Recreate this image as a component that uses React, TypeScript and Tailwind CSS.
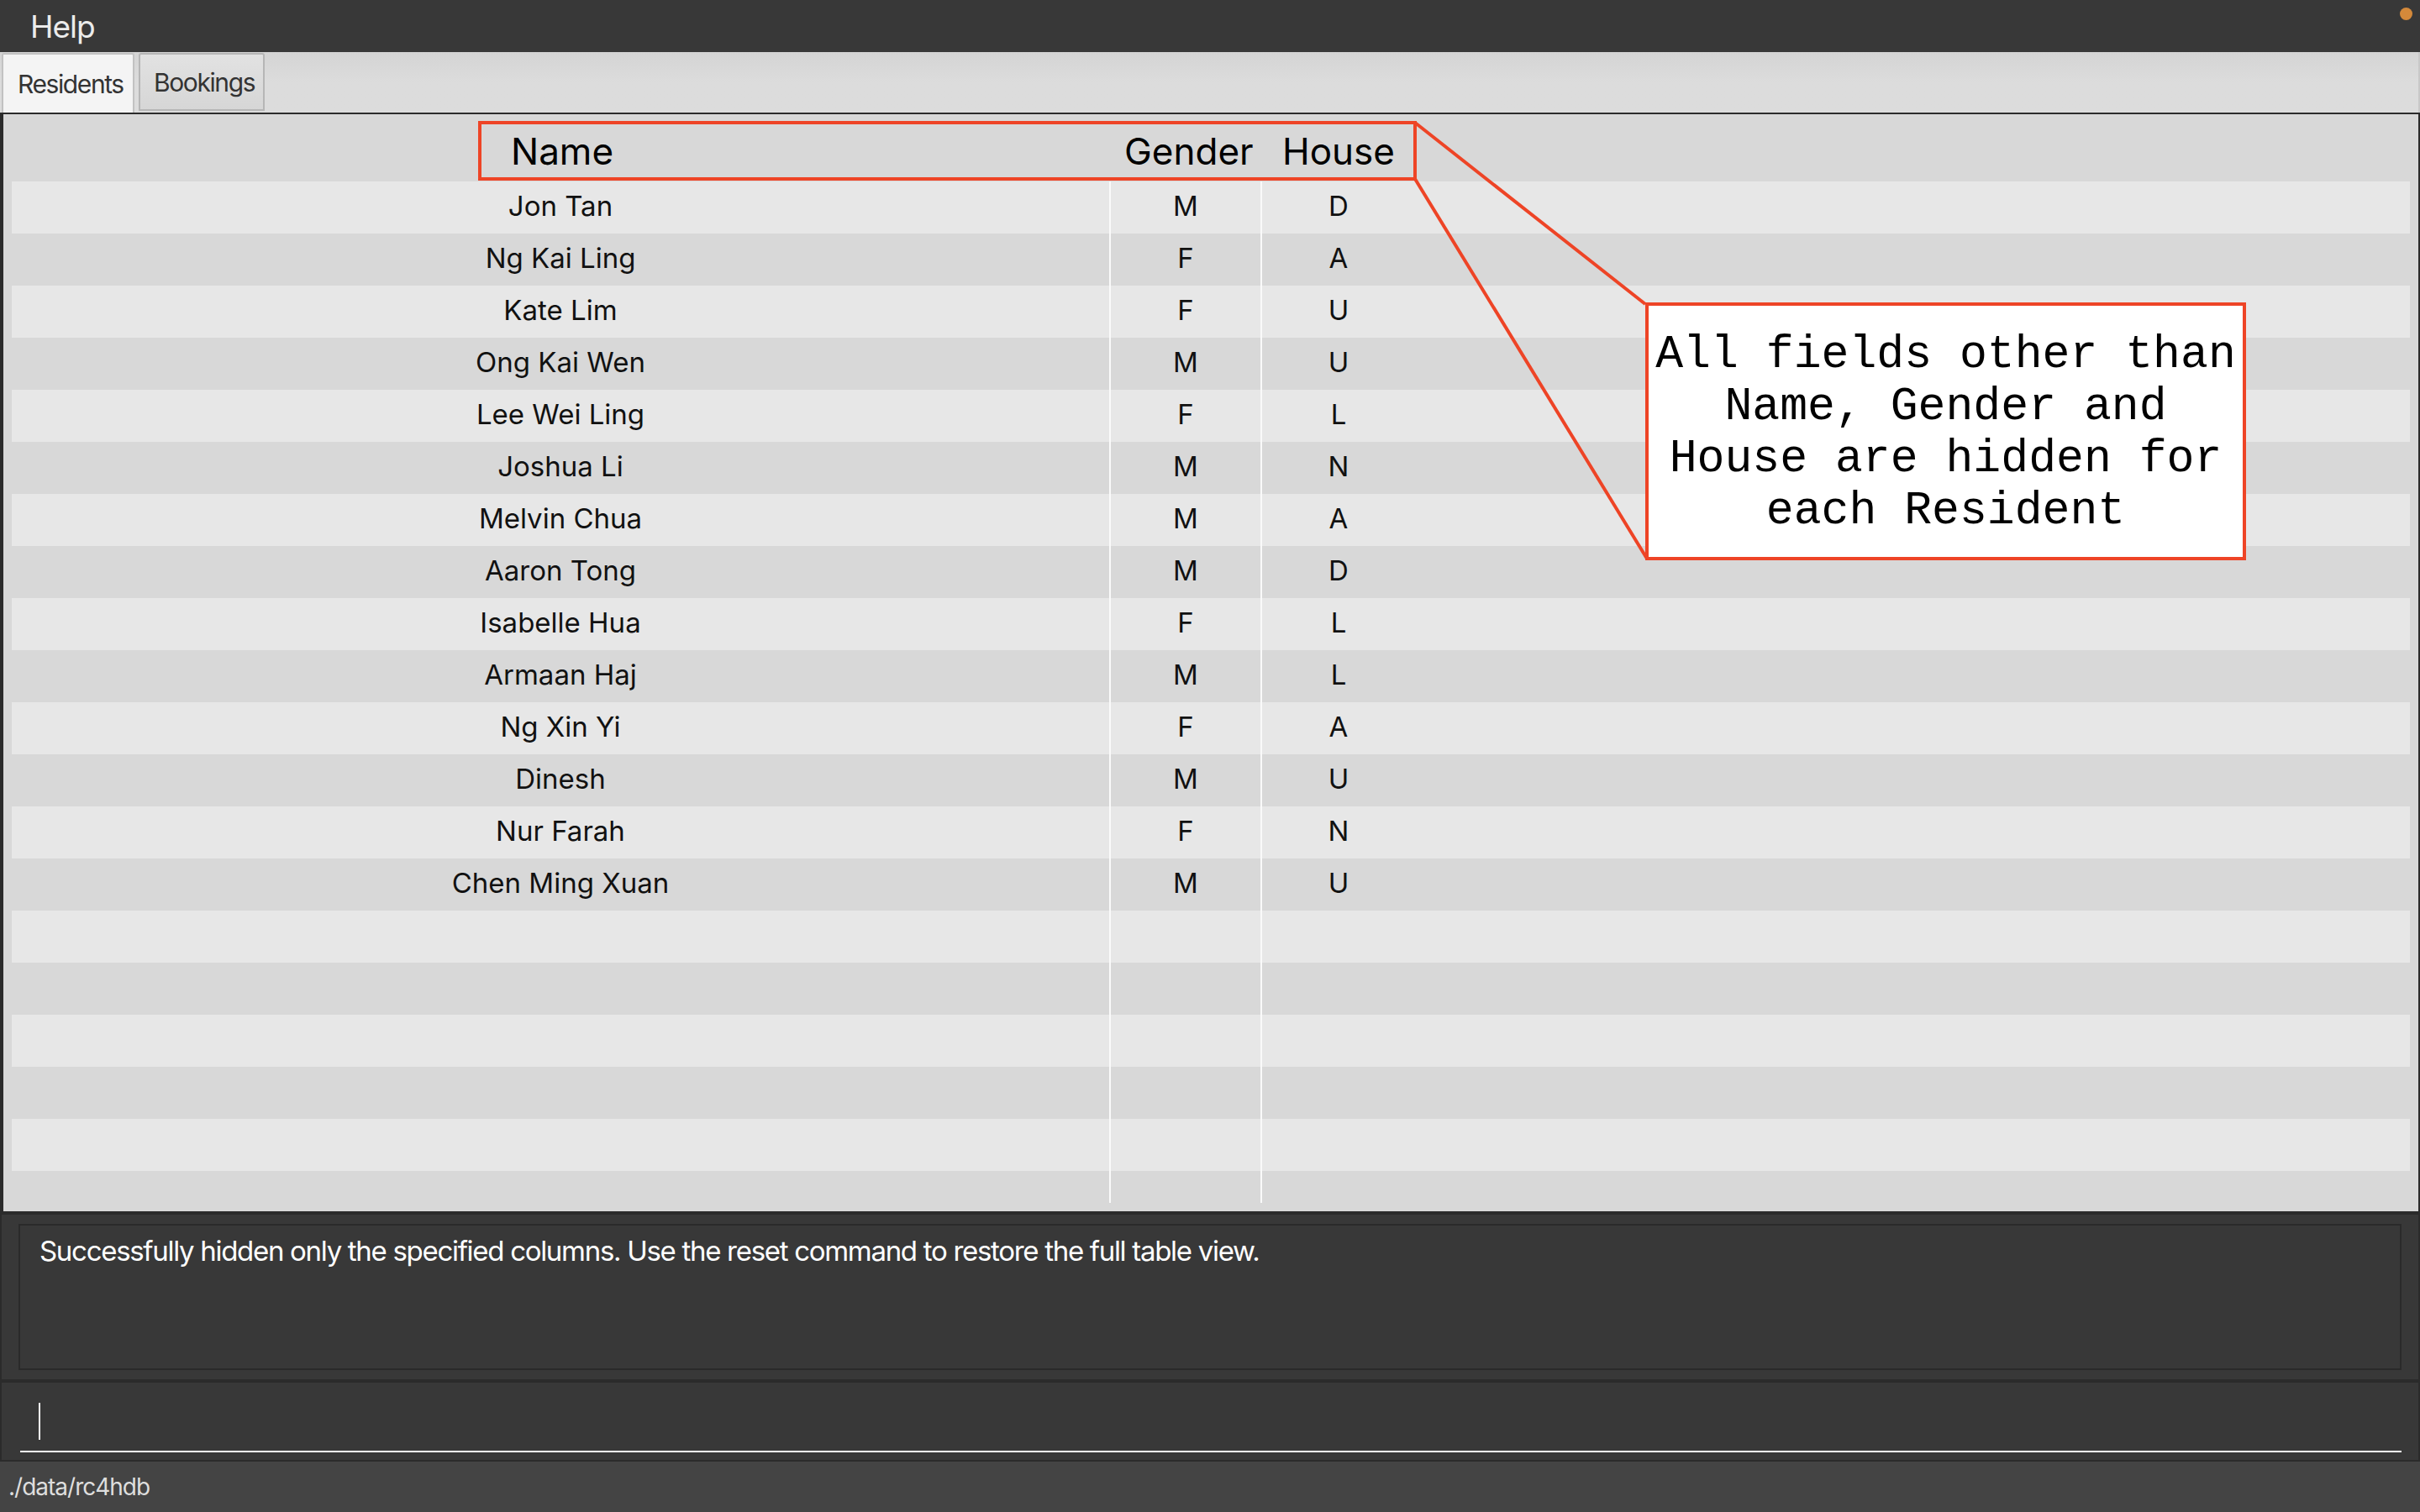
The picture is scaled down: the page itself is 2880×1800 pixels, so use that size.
import React from "react";

const residents: [string, string, string][] = [
  ["Jon Tan", "M", "D"],
  ["Ng Kai Ling", "F", "A"],
  ["Kate Lim", "F", "U"],
  ["Ong Kai Wen", "M", "U"],
  ["Lee Wei Ling", "F", "L"],
  ["Joshua Li", "M", "N"],
  ["Melvin Chua", "M", "A"],
  ["Aaron Tong", "M", "D"],
  ["Isabelle Hua", "F", "L"],
  ["Armaan Haj", "M", "L"],
  ["Ng Xin Yi", "F", "A"],
  ["Dinesh", "M", "U"],
  ["Nur Farah", "F", "N"],
  ["Chen Ming Xuan", "M", "U"],
];

const rows: [string, string, string][] = [
  ...residents,
  ["", "", ""],
  ["", "", ""],
  ["", "", ""],
  ["", "", ""],
  ["", "", ""],
];

const font = { fontFamily: "Inter, 'Noto Sans', sans-serif" };

export default function App() {
  return (
    <div
      className="relative w-[2880px] h-[1800px] flex flex-col bg-[#2b2b2b] overflow-hidden"
      style={font}
    >
      {/* Menu bar */}
      <div className="h-[62px] shrink-0 bg-[#383838] flex items-center pl-[36px] relative">
        <span className="text-[37px] text-[#ebebeb] leading-none tracking-[-1px]">Help</span>
        <div className="absolute right-[9px] top-[9px] w-[15px] h-[15px] rounded-full bg-[#d4893a]" />
      </div>

      {/* Tab header */}
      <div className="h-[72px] shrink-0 bg-gradient-to-b from-[#d4d4d4] via-[#dcdcdc] to-[#dcdcdc] flex items-end pl-[2px] gap-[5px] border-r-2 border-[#c8c8c8]">
        <div className="h-[71px] w-[158px] bg-[#f4f4f4] border-x-2 border-t-2 border-[#c2c2c2] rounded-t-[3px] flex items-center pl-[17px]">
          <span className="text-[30px] text-[#333333] leading-none tracking-[-1.4px]">Residents</span>
        </div>
        <div className="h-[69px] mb-[2px] w-[150px] bg-gradient-to-b from-[#e2e2e2] to-[#d6d6d6] border-2 border-[#b6b6b6] rounded-t-[3px] flex items-center pl-[16px]">
          <span className="text-[30px] text-[#333333] leading-none tracking-[-1.4px]">Bookings</span>
        </div>
      </div>

      {/* Table panel */}
      <div className="h-[1308px] shrink-0 border-t-2 border-l-4 border-r-2 border-[#2b2b2b] bg-[#d8d8d8] flex flex-col pl-[10px] pr-[10px]">
        {/* Header */}
        <div className="h-[80px] shrink-0 flex items-center text-[44px] text-black pt-[7px]">
          <div className="w-[1308px] pl-[594px]">Name</div>
          <div className="w-[180px] pl-[16px]">Gender</div>
          <div className="w-[184px] pl-[24px]">House</div>
        </div>
        {/* Rows */}
        <div className="flex flex-col h-[1216px] overflow-hidden">
          {rows.map((r, i) => (
            <div
              key={i}
              className={`h-[62px] shrink-0 flex text-[33px] text-[#111111] ${
                i % 2 === 0 ? "bg-[#e7e7e7]" : "bg-[#d8d8d8]"
              }`}
            >
              <div className="w-[1306px] flex items-center justify-center pb-[3px]">{r[0]}</div>
              <div className="w-[2px] bg-[#fafafa]" />
              <div className="w-[178px] flex items-center justify-center pb-[3px]">{r[1]}</div>
              <div className="w-[2px] bg-[#fafafa]" />
              <div className="w-[182px] flex items-center justify-center pb-[3px]">{r[2]}</div>
              <div className="flex-1" />
            </div>
          ))}
          <div className="h-[38px] shrink-0 flex">
            <div className="w-[1306px]" />
            <div className="w-[2px] bg-[#fafafa]" />
            <div className="w-[178px]" />
            <div className="w-[2px] bg-[#fafafa]" />
          </div>
        </div>
      </div>

      <div className="h-[4px] shrink-0 bg-[#2b2b2b]" />

      {/* Result display */}
      <div className="h-[196px] shrink-0 bg-[#383838] border-x-2 border-[#2b2b2b] pl-[20px] pr-[20px] pt-[11px] pb-[11px]">
        <div className="h-full border-2 border-[#2a2a2a] pl-[23px] pt-[10px] text-[33px] text-white leading-[1.25] tracking-[-1.3px]">
          Successfully hidden only the specified columns. Use the reset command to restore the full table view.
        </div>
      </div>

      <div className="h-[4px] shrink-0 bg-[#2b2b2b]" />

      {/* Command box */}
      <div className="h-[92px] shrink-0 bg-[#383838] border-x-2 border-[#2b2b2b] pl-[22px] pr-[20px] flex flex-col">
        <div className="flex-1 flex items-start pt-[24px] pl-[22px]">
          <div className="w-[2px] h-[44px] bg-white" />
        </div>
        <div className="h-[2px] bg-white mb-[9px]" />
      </div>

      <div className="h-[2px] shrink-0 bg-[#2b2b2b]" />

      {/* Status bar */}
      <div className="flex-1 bg-[#444444] flex items-center pl-[10px]">
        <span className="text-[28px] text-[#dedede] leading-none tracking-[-1px]">./data/rc4hdb</span>
      </div>

      {/* Annotation overlay */}
      <div className="absolute left-[569px] top-[144px] w-[1117px] h-[71px] border-4 border-[#ee4426]" />
      <svg
        className="absolute left-0 top-0 pointer-events-none"
        width={2880}
        height={1800}
      >
        <line x1={1684} y1={146} x2={1958} y2={362} stroke="#ee4426" strokeWidth={4} />
        <line x1={1684} y1={213} x2={1960} y2={665} stroke="#ee4426" strokeWidth={4} />
      </svg>
      <div className="absolute left-[1958px] top-[360px] w-[715px] h-[307px] border-4 border-[#ee4426] bg-white flex flex-col items-center justify-center">
        <div
          className="text-[54.8px] leading-[62px] text-black text-center whitespace-pre pt-[2px]"
          style={{ fontFamily: "'Liberation Mono', 'Courier New', monospace" }}
        >
          {"All fields other than\nName, Gender and\nHouse are hidden for\neach Resident"}
        </div>
      </div>
    </div>
  );
}
